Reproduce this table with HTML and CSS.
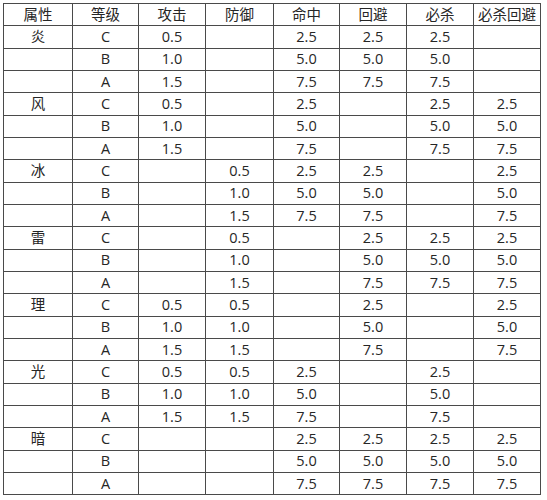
FILE: index.html
```html
<!DOCTYPE html>
<html lang="zh-CN">
<head>
<meta charset="utf-8">
<title>属性表</title>
<link rel="stylesheet" href="styles.css">
</head>
<body>
<table class="attr-table">
  <colgroup>
    <col class="c1"><col class="c2"><col class="c3"><col class="c4">
    <col class="c5"><col class="c6"><col class="c7"><col class="c8">
  </colgroup>
  <thead>
    <tr><th>属性</th><th>等级</th><th>攻击</th><th>防御</th><th>命中</th><th>回避</th><th>必杀</th><th>必杀回避</th></tr>
  </thead>
  <tbody>
    <tr><td>炎</td><td>C</td><td>0.5</td><td></td><td>2.5</td><td>2.5</td><td>2.5</td><td></td></tr>
    <tr><td></td><td>B</td><td>1.0</td><td></td><td>5.0</td><td>5.0</td><td>5.0</td><td></td></tr>
    <tr><td></td><td>A</td><td>1.5</td><td></td><td>7.5</td><td>7.5</td><td>7.5</td><td></td></tr>
    <tr><td>风</td><td>C</td><td>0.5</td><td></td><td>2.5</td><td></td><td>2.5</td><td>2.5</td></tr>
    <tr><td></td><td>B</td><td>1.0</td><td></td><td>5.0</td><td></td><td>5.0</td><td>5.0</td></tr>
    <tr><td></td><td>A</td><td>1.5</td><td></td><td>7.5</td><td></td><td>7.5</td><td>7.5</td></tr>
    <tr><td>冰</td><td>C</td><td></td><td>0.5</td><td>2.5</td><td>2.5</td><td></td><td>2.5</td></tr>
    <tr><td></td><td>B</td><td></td><td>1.0</td><td>5.0</td><td>5.0</td><td></td><td>5.0</td></tr>
    <tr><td></td><td>A</td><td></td><td>1.5</td><td>7.5</td><td>7.5</td><td></td><td>7.5</td></tr>
    <tr><td>雷</td><td>C</td><td></td><td>0.5</td><td></td><td>2.5</td><td>2.5</td><td>2.5</td></tr>
    <tr><td></td><td>B</td><td></td><td>1.0</td><td></td><td>5.0</td><td>5.0</td><td>5.0</td></tr>
    <tr><td></td><td>A</td><td></td><td>1.5</td><td></td><td>7.5</td><td>7.5</td><td>7.5</td></tr>
    <tr><td>理</td><td>C</td><td>0.5</td><td>0.5</td><td></td><td>2.5</td><td></td><td>2.5</td></tr>
    <tr><td></td><td>B</td><td>1.0</td><td>1.0</td><td></td><td>5.0</td><td></td><td>5.0</td></tr>
    <tr><td></td><td>A</td><td>1.5</td><td>1.5</td><td></td><td>7.5</td><td></td><td>7.5</td></tr>
    <tr><td>光</td><td>C</td><td>0.5</td><td>0.5</td><td>2.5</td><td></td><td>2.5</td><td></td></tr>
    <tr><td></td><td>B</td><td>1.0</td><td>1.0</td><td>5.0</td><td></td><td>5.0</td><td></td></tr>
    <tr><td></td><td>A</td><td>1.5</td><td>1.5</td><td>7.5</td><td></td><td>7.5</td><td></td></tr>
    <tr><td>暗</td><td>C</td><td></td><td></td><td>2.5</td><td>2.5</td><td>2.5</td><td>2.5</td></tr>
    <tr><td></td><td>B</td><td></td><td></td><td>5.0</td><td>5.0</td><td>5.0</td><td>5.0</td></tr>
    <tr><td></td><td>A</td><td></td><td></td><td>7.5</td><td>7.5</td><td>7.5</td><td>7.5</td></tr>
  </tbody>
</table>
</body>
</html>
```
FILE: styles.css
```css
html, body {
  margin: 0;
  padding: 0;
  background: #ffffff;
}

body {
  padding: 3px 0 0 3px;
  font-family: "Open Sans", "Noto Sans CJK SC", sans-serif;
  color: #262626;
}

.attr-table {
  border-collapse: collapse;
  table-layout: fixed;
  width: 538px;
  font-size: 14.5px;
}

.c1 { width: 69px; }
.c2 { width: 66px; }
.c3 { width: 67px; }
.c4 { width: 68px; }
.c5 { width: 66px; }
.c6 { width: 67px; }
.c7 { width: 67px; }
.c8 { width: 67px; }

.attr-table th,
.attr-table td {
  border: 1px solid #4a4a4a;
  height: 21.33px;
  padding: 0;
  line-height: 20px;
  text-align: center;
  vertical-align: middle;
  font-weight: normal;
  white-space: nowrap;
}
```
